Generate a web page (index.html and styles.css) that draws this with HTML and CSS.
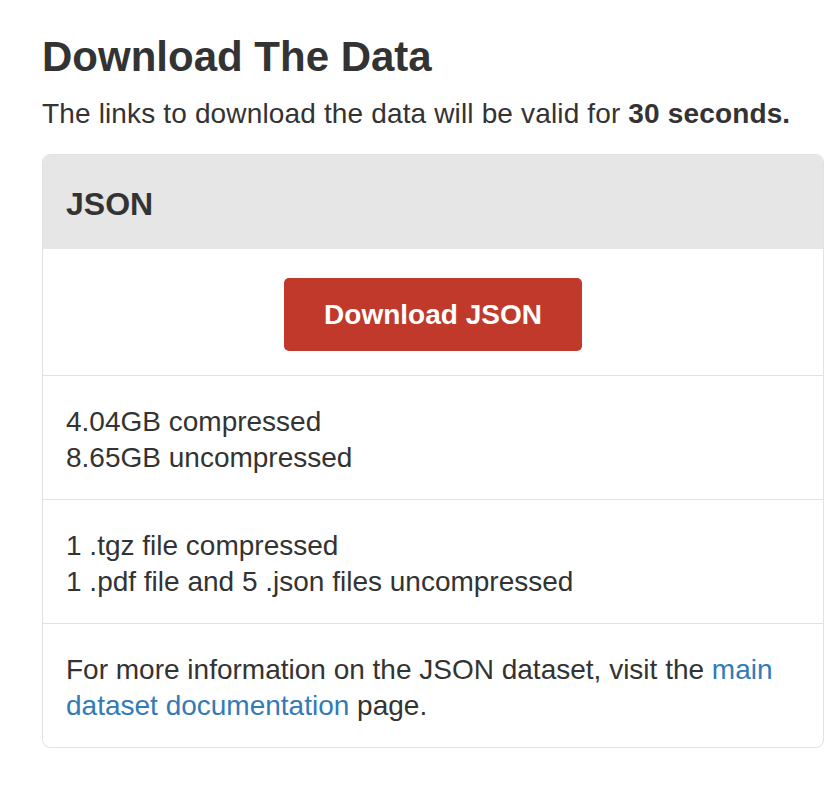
FILE: index.html
```html
<!DOCTYPE html>
<html lang="en">
<head>
<meta charset="utf-8">
<title>Download The Data</title>
<link rel="stylesheet" href="styles.css">
</head>
<body>
<main class="page">
  <h1 class="title">Download The Data</h1>
  <p class="lead">The links to download the data will be valid for <strong>30 seconds.</strong></p>
  <section class="card">
    <header class="card-header">
      <h2 class="card-title">JSON</h2>
    </header>
    <ul class="card-list">
      <li class="card-row card-row-action">
        <a class="btn-download" href="#">Download JSON</a>
      </li>
      <li class="card-row">
        4.04GB compressed<br>
        8.65GB uncompressed
      </li>
      <li class="card-row">
        1 .tgz file compressed<br>
        1 .pdf file and 5 .json files uncompressed
      </li>
      <li class="card-row">
        For more information on the JSON dataset, visit the <a class="link" href="#">main</a>
        <a class="link" href="#">dataset documentation</a> page.
      </li>
    </ul>
  </section>
</main>
</body>
</html>
```

FILE: styles.css
```css
html, body {
  margin: 0;
  padding: 0;
  background: #ffffff;
}

body {
  font-family: "Liberation Sans", Arial, Helvetica, sans-serif;
  color: #333333;
}

.page {
  padding: 34px 12px 40px 42px;
}

.title {
  margin: 0;
  font-size: 42px;
  line-height: 46px;
  font-weight: bold;
  color: #333333;
}

.lead {
  margin: 16px 0 0 0;
  font-size: 28px;
  line-height: 36px;
  letter-spacing: 0.15px;
}

.lead strong {
  font-weight: bold;
}

.card {
  margin-top: 22px;
  border: 1px solid #e2e2e2;
  border-radius: 8px;
  overflow: hidden;
  background: #ffffff;
}

.card-header {
  background: #e6e6e6;
  padding: 31px 23px 27px 23px;
}

.card-title {
  margin: 0;
  font-size: 32px;
  line-height: 36px;
  font-weight: bold;
  color: #333333;
}

.card-list {
  list-style: none;
  margin: 0;
  padding: 0;
}

.card-row {
  padding: 28px 23px 23px 23px;
  font-size: 28px;
  line-height: 36px;
  border-top: 1px solid #e2e2e2;
}

.card-row-action {
  border-top: 0;
  display: flex;
  justify-content: center;
  padding: 29px 23px 24px 23px;
}

.btn-download {
  display: flex;
  align-items: center;
  justify-content: center;
  width: 298px;
  height: 73px;
  box-sizing: border-box;
  background: #c0392b;
  color: #ffffff;
  font-weight: bold;
  font-size: 28px;
  text-decoration: none;
  border-radius: 5px;
}

.link {
  color: #337ab7;
  text-decoration: none;
}
```
